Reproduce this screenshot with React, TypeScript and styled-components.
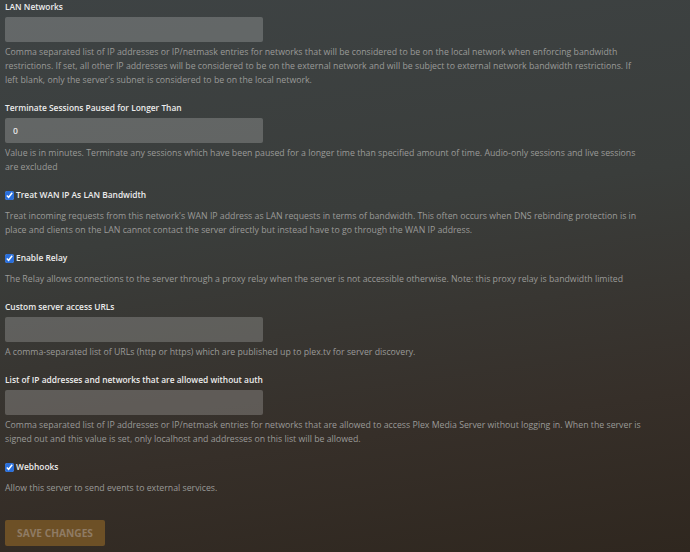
import styled, { createGlobalStyle } from "styled-components";

const GlobalStyle = createGlobalStyle`
  html, body {
    margin: 0;
    padding: 0;
    height: 100%;
  }
  body {
    background: linear-gradient(172deg, #3e4344 0%, #3a3d3b 40%, #362f29 75%, #2f271f 100%);
    font-family: "Open Sans", "Noto Sans", sans-serif;
    overflow: hidden;
  }
  #root {
    min-height: 100%;
  }
`;

type Setting = {
  label: string;
  kind: "text" | "check";
  value?: string;
  help: string;
};

const settings: Setting[] = [
  {
    label: "LAN Networks",
    kind: "text",
    help: "Comma separated list of IP addresses or IP/netmask entries for networks that will be considered to be on the local network when enforcing bandwidth restrictions. If set, all other IP addresses will be considered to be on the external network and will be subject to external network bandwidth restrictions. If left blank, only the server's subnet is considered to be on the local network.",
  },
  {
    label: "Terminate Sessions Paused for Longer Than",
    kind: "text",
    value: "0",
    help: "Value is in minutes. Terminate any sessions which have been paused for a longer time than specified amount of time. Audio-only sessions and live sessions are excluded",
  },
  {
    label: "Treat WAN IP As LAN Bandwidth",
    kind: "check",
    help: "Treat incoming requests from this network's WAN IP address as LAN requests in terms of bandwidth. This often occurs when DNS rebinding protection is in place and clients on the LAN cannot contact the server directly but instead have to go through the WAN IP address.",
  },
  {
    label: "Enable Relay",
    kind: "check",
    help: "The Relay allows connections to the server through a proxy relay when the server is not accessible otherwise. Note: this proxy relay is bandwidth limited",
  },
  {
    label: "Custom server access URLs",
    kind: "text",
    help: "A comma-separated list of URLs (http or https) which are published up to plex.tv for server discovery.",
  },
  {
    label: "List of IP addresses and networks that are allowed without auth",
    kind: "text",
    help: "Comma separated list of IP addresses or IP/netmask entries for networks that are allowed to access Plex Media Server without logging in. When the server is signed out and this value is set, only localhost and addresses on this list will be allowed.",
  },
  {
    label: "Webhooks",
    kind: "check",
    help: "Allow this server to send events to external services.",
  },
];

function App() {
  return (
    <>
      <GlobalStyle />
      <Page>
        {settings.map((s, i) => (
          <Group key={i}>
            {s.kind === "text" ? (
              <>
                <Label>{s.label}</Label>
                <TextInput defaultValue={s.value ?? ""} />
              </>
            ) : (
              <CheckRow>
                <CheckBox type="checkbox" defaultChecked />
                <Label>{s.label}</Label>
              </CheckRow>
            )}
            <Help $check={s.kind === "check"}>{s.help}</Help>
          </Group>
        ))}
        <SaveButton disabled>Save Changes</SaveButton>
      </Page>
    </>
  );
}

export default App;

const Page = styled.div`
  display: flex;
  flex-direction: column;
  align-items: flex-start;
  padding: 0 5px;
  width: 640px;
`;

const Group = styled.div`
  display: flex;
  flex-direction: column;
  align-items: stretch;
  margin-bottom: 14px;
  width: 100%;
`;

const Label = styled.label`
  color: #ececec;
  font-size: 8.4px;
  font-weight: 600;
  line-height: 14px;
  margin-bottom: 3px;
`;

const TextInput = styled.input`
  box-sizing: border-box;
  width: 258px;
  height: 25px;
  border: none;
  border-radius: 2px;
  background: rgba(255, 255, 255, 0.2);
  color: #e8e8e8;
  font-family: inherit;
  font-size: 8.6px;
  font-weight: 600;
  padding: 0 8px;
  outline: none;
`;

const CheckRow = styled.div`
  display: flex;
  align-items: center;
  gap: 2px;
  ${Label} {
    margin-bottom: 0;
  }
`;

const CheckBox = styled.input`
  width: 9px;
  height: 9px;
  margin: 0;
  accent-color: #2a6fdb;
`;

const Help = styled.p<{ $check: boolean }>`
  margin: ${(p) => (p.$check ? "7px" : "3px")} 0 0;
  color: #9a9a98;
  font-size: 8.75px;
  line-height: 14px;
`;

const SaveButton = styled.button`
  margin-top: 11px;
  width: 100px;
  height: 26px;
  border: none;
  border-radius: 2px;
  background: #6d5026;
  color: #8f7b64;
  font-family: inherit;
  font-size: 10.2px;
  font-weight: 700;
  text-transform: uppercase;
`;
